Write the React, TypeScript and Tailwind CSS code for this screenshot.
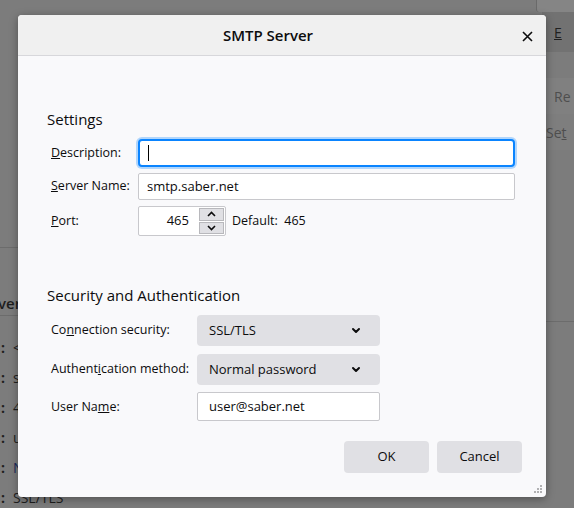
import React from "react";

const font = { fontFamily: '"Open Sans", "Noto Sans", sans-serif' };

const Chevron = () => (
  <svg width="10" height="7" viewBox="0 0 10 7" className="shrink-0">
    <path d="M2 2 L5 5 L8 2" fill="none" stroke="#0c0c0d" strokeWidth="2" strokeLinecap="round" strokeLinejoin="round" />
  </svg>
);

const Select = ({ value }: { value: string }) => (
  <div className="w-[183px] h-[31px] rounded-[4px] bg-[#e0e0e4] flex items-center justify-between pl-[12px] pr-[19px] text-[13px] text-[#0c0c0d]">
    <span>{value}</span>
    <Chevron />
  </div>
);

const Background = () => (
  <div className="absolute inset-0 bg-[#7c7c7c] text-[#1e1e1e] flex justify-between">
    <div className="w-[18px] flex flex-col">
      <div className="h-[253px] border-b border-[#6c6c6c]" />
      <div className="mt-[46px] pb-[3px] border-b border-[#6c6c6c] text-[15px] font-semibold leading-[18px] -ml-[2px] whitespace-nowrap">ver</div>
      <div className="flex flex-col mt-[22px] gap-[10px] text-[14px] leading-[20px] pl-[1px]">
        {["<", "s", "4", "u", "N", "SSL/TLS"].map((t, i) => (
          <div key={i} className="flex gap-[8px] whitespace-nowrap">
            <span className="font-bold">:</span>
            <span className={i === 4 ? "text-[#1a2a5a]" : ""}>{t}</span>
          </div>
        ))}
      </div>
    </div>
    <div className="w-[32px] flex flex-col text-[14px] text-[#4e4e4e]">
      <div className="h-[12px] ml-[-6px] bg-[#858585] border-l border-[#6a6a6a] rounded-bl-[3px]" />
      <div className="h-[40px] bg-[#727272] flex items-center pl-[12px] text-[#202020]"><u>E</u></div>
      <div className="h-[26px]" />
      <div className="h-[36px] bg-[#808080] flex items-center pl-[12px]">Re</div>
      <div className="h-[36px] bg-[#7e7e7e] flex items-center pl-[4px]">Se<u>t</u></div>
      <div className="h-[172px] border-b border-[#6c6c6c]" />
    </div>
  </div>
);

export default function App() {
  return (
    <div className="relative w-[574px] h-[508px] overflow-hidden" style={font}>
      <Background />
      <div className="absolute left-[18px] top-[15px] w-[528px] h-[482px] rounded-[4px] bg-[#f9f9fb] shadow-[0_2px_8px_rgba(0,0,0,0.35)] flex flex-col text-[#0c0c0d]">
        <div className="h-[41px] rounded-t-[4px] bg-[#f0f0f0] border-b border-[#d7d7db] relative flex items-center justify-center pr-[28px]">
          <span className="text-[15px] font-semibold">SMTP Server</span>
          <svg width="11" height="11" viewBox="0 0 11 11" className="absolute right-[13px] top-[16px]">
            <path d="M1 1 L10 10 M10 1 L1 10" stroke="#0c0c0d" strokeWidth="1.6" />
          </svg>
        </div>
        <div className="flex-1 flex flex-col pl-[29px] pr-[24px] text-[12.5px]">
          <div className="mt-[53px] text-[15px] font-medium leading-[20px]">Settings</div>
          <div className="mt-[10px] grid grid-cols-[87px_1fr] gap-y-[6px] items-center pl-[4px]">
            <span><u>D</u>escription:</span>
            <div className="h-[28px] rounded-[4px] border-2 border-[#0a84ff] shadow-[0_0_0_2px_rgba(10,132,255,0.3)] bg-white flex items-center pl-[8px] mr-[7px]">
              <div className="w-px h-[16px] bg-black" />
            </div>
            <span><u>S</u>erver Name:</span>
            <div className="h-[27px] rounded-[2px] border border-[#c8c8cc] bg-white flex items-center pl-[8px] mr-[7px] text-[13px]">smtp.saber.net</div>
            <span><u>P</u>ort:</span>
            <div className="flex items-center gap-[6px]">
              <div className="w-[88px] h-[30px] rounded-[2px] border border-[#c8c8cc] bg-white flex items-center text-[13px]">
                <span className="flex-1 text-right pr-[10px]">465</span>
                <div className="w-[26px] h-full flex flex-col gap-[1px] py-[1px] pr-[1px]">
                  <div className="flex-1 bg-[#e0e0e4] border border-[#b8b8bc] flex items-center justify-center">
                    <svg width="9" height="6" viewBox="0 0 9 6"><path d="M1 5 L4.5 1.5 L8 5" fill="none" stroke="#0c0c0d" strokeWidth="1.6" /></svg>
                  </div>
                  <div className="flex-1 bg-[#e0e0e4] border border-[#b8b8bc] flex items-center justify-center">
                    <svg width="9" height="6" viewBox="0 0 9 6"><path d="M1 1 L4.5 4.5 L8 1" fill="none" stroke="#0c0c0d" strokeWidth="1.6" /></svg>
                  </div>
                </div>
              </div>
              <span>Default:&nbsp;&nbsp;465</span>
            </div>
          </div>
          <div className="mt-[49px] text-[15px] font-medium leading-[20px]">Security and Authentication</div>
          <div className="mt-[10px] grid grid-cols-[146px_auto] justify-start gap-y-[8px] items-center pl-[4px]">
            <span>Co<u>n</u>nection security:</span>
            <Select value="SSL/TLS" />
            <span>Authent<u>i</u>cation method:</span>
            <Select value="Normal password" />
            <span>User Na<u>m</u>e:</span>
            <div className="w-[183px] h-[29px] rounded-[2px] border border-[#c8c8cc] bg-white flex items-center pl-[11px] -mt-[1px] text-[13px]">user@saber.net</div>
          </div>
          <div className="mt-[20px] flex justify-end gap-[8px] text-[13px]">
            <button className="w-[85px] h-[32px] rounded-[4px] bg-[#e0e0e4]">OK</button>
            <button className="w-[85px] h-[32px] rounded-[4px] bg-[#e0e0e4]">Cancel</button>
          </div>
        </div>
        <svg width="8" height="8" viewBox="0 0 8 8" className="absolute right-[4px] bottom-[4px]">
          <g fill="#b1b1b3">
            <rect x="6" y="0" width="2" height="2" />
            <rect x="3" y="3" width="2" height="2" />
            <rect x="6" y="3" width="2" height="2" />
            <rect x="0" y="6" width="2" height="2" />
            <rect x="3" y="6" width="2" height="2" />
            <rect x="6" y="6" width="2" height="2" />
          </g>
        </svg>
      </div>
    </div>
  );
}
